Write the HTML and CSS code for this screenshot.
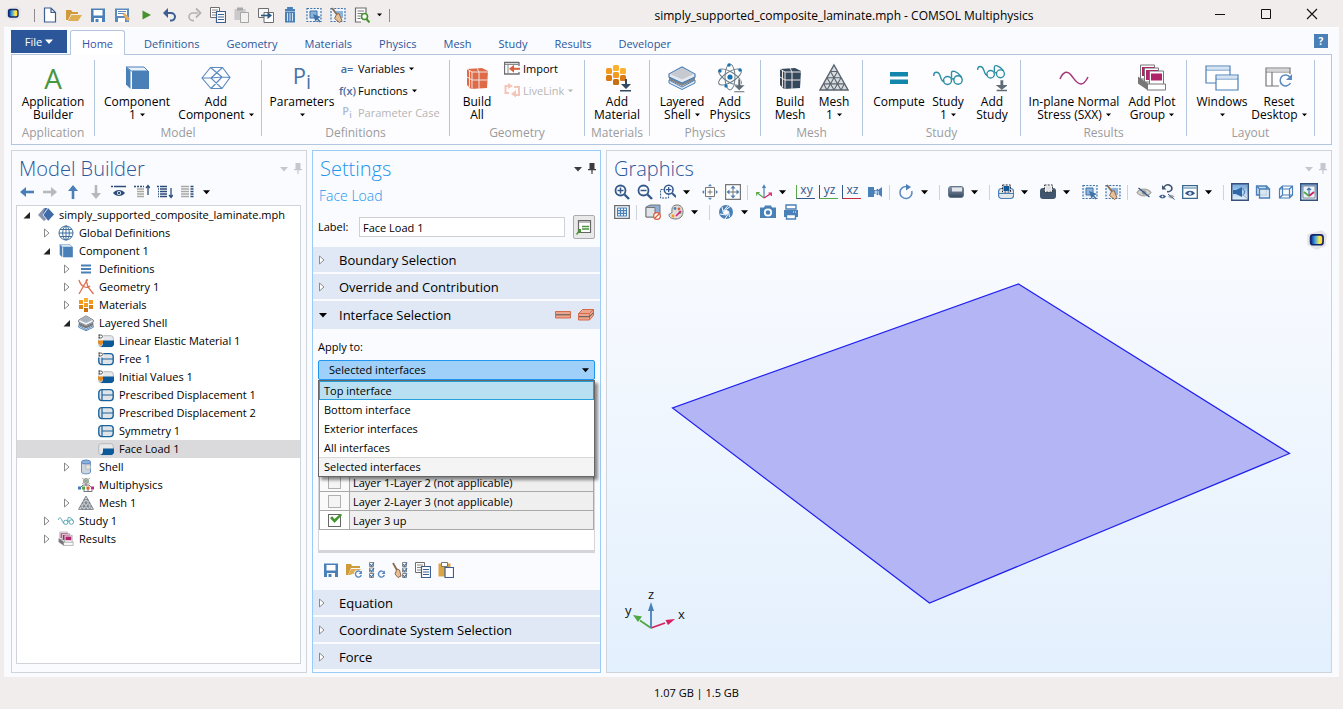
FILE: index.html
```html
<!DOCTYPE html>
<html lang="en">
<head>
<meta charset="utf-8">
<title>simply_supported_composite_laminate.mph - COMSOL Multiphysics</title>
<link rel="stylesheet" href="styles.css">
</head>
<body>
<svg class="sprite" aria-hidden="true">
  <defs>
    <linearGradient id="g-logo"><stop offset="0" stop-color="#12207a"/><stop offset=".35" stop-color="#3aa0e8"/><stop offset=".7" stop-color="#ffe94a"/><stop offset="1" stop-color="#ffd21a"/></linearGradient>
    <linearGradient id="g-dark" x2="0" y2="1"><stop offset="0" stop-color="#8d9aab"/><stop offset="1" stop-color="#33475f"/></linearGradient>
    <linearGradient id="g-on" x2="0" y2="1"><stop offset="0" stop-color="#6fa6dc"/><stop offset="1" stop-color="#eaf4fd"/></linearGradient>
  </defs>
  <symbol id="caret" viewBox="0 0 8 5"><path d="M0 0h8L4 4.600z" fill="currentColor"/></symbol>
  <symbol id="logo" viewBox="0 0 16 16"><path d="M1 4L12 1l4 3-1 9-7 3-7-4z" fill="#e6e4e8"/><rect x="3.500" y="4.500" width="9.500" height="7.500" rx="2" fill="url(#g-logo)" stroke="#12286e" stroke-width="1.300"/></symbol>
  <symbol id="new" viewBox="0 0 16 16"><path d="M2.500 1h6.500l4.500 4.500V15h-11zM9 1v4.500h4.500" fill="#fff" stroke="#3b5f92" stroke-width="1.200"/></symbol>
  <symbol id="open" viewBox="0 0 16 16"><path d="M0 3h5l1.500 2H12v2H5l-3 6H0z" fill="#cf9a3c"/><path d="M5.500 8H16l-4 6H2z" fill="#dfae52"/></symbol>
  <symbol id="save" viewBox="0 0 16 16"><path d="M1 1.500h14V15H1z" fill="#4a80b8"/><path d="M3.500 3h9v5.500h-9zM4 11h8v4H4z" fill="#fff"/><path d="M5.500 12h3v3h-3z" fill="#4a80b8"/></symbol>
  <symbol id="saveas" viewBox="0 0 16 16"><path d="M1 1.500h14V15H1z" fill="#5b8bbd"/><path d="M3 3h10v6H3zM4 11h7v4H4z" fill="#fff"/><path d="M4 4.500h8M4 6.500h6" stroke="#5b8bbd"/><path d="M8.500 7l2.500-1 5 6-2.500 2.500z" fill="#e5ad5d"/></symbol>
  <symbol id="run" viewBox="0 0 16 16"><path d="M4.500 3.500L13 8l-8.500 4.500z" fill="#47922f"/></symbol>
  <symbol id="undo" viewBox="0 0 16 16"><path d="M3 6h6a4 3.800 0 010 7.600H8" fill="none" stroke="#3c5e90" stroke-width="2"/><path d="M1 6l5-5v10z" fill="#3c5e90"/></symbol>
  <symbol id="redo" viewBox="0 0 16 16"><path d="M12 6H7a4 3.800 0 000 7.600h1" fill="none" stroke="#b3b1b1" stroke-width="1.600"/><path d="M10 1.500L14.500 6 10 10.500" fill="none" stroke="#b3b1b1" stroke-width="1.800"/></symbol>
  <symbol id="copy" viewBox="0 0 16 16"><path d="M.5.5h9v10h-9z" fill="#fff" stroke="#6d6d6d"/><path d="M2 3h6M2 5.500h6M2 8h6" stroke="#888"/><path d="M6.500 4.500h9v11h-9z" fill="#fff" stroke="#3b5f92" stroke-width="1.200"/><path d="M8 7.500h6M8 10h6M8 12.500h6" stroke="#3b5f92" stroke-width="1.200"/></symbol>
  <symbol id="paste-off" viewBox="0 0 16 16"><path d="M.5 2h11v11H.5z" fill="#cbc9c9"/><path d="M3 .5h6v3H3z" fill="#a9a9a9"/><path d="M6.500 5.500h8v10h-8z" fill="#f3f1f1" stroke="#a5a5a5"/></symbol>
  <symbol id="paste" viewBox="0 0 16 16"><path d="M.5 1.500h12v13H.5z" fill="#dba544"/><path d="M3.500.5h6v4h-6z" fill="#fff" stroke="#777"/><path d="M7 5.500h8.500v10H7z" fill="#fff" stroke="#3b5f92" stroke-width="1.200"/></symbol>
  <symbol id="dup" viewBox="0 0 16 16"><path d="M.5 1.500h10v9H.5z" fill="#f8f7f7" stroke="#6d6d6d"/><path d="M6 5.500h9.500v10H6z" fill="#fff" stroke="#6d6d6d"/><path d="M3 8.500h8" stroke="#2d5680" stroke-width="1.600"/><path d="M9.500 5l4.500 3.500L9.500 12z" fill="#2d5680"/></symbol>
  <symbol id="trash" viewBox="0 0 16 16"><path d="M3 3h10M6 2V1h4v1" fill="none" stroke="#4a80b8" stroke-width="1.800"/><path d="M3 4.500h10V15.500H3z" fill="#4a80b8"/><path d="M5.500 6v8M8 6v8M10.500 6v8" stroke="#d6e5f3"/></symbol>
  <symbol id="selbox" viewBox="0 0 16 16"><path d="M1 1.500h14v13H1z" fill="#edf4fb" stroke="#3f72a8" stroke-width="1.200" stroke-dasharray="2 1.300"/><path d="M4 4h7v7H4z" fill="#8fb4da" stroke="#3f72a8"/><path d="M7 7l8 3-3 1.500 3 3-1.500 1-2.500-3L9.500 15z" fill="#3f72a8"/></symbol>
  <symbol id="selclear" viewBox="0 0 16 16"><path d="M1 1.500h14v13H1z" fill="#edf4fb" stroke="#3f72a8" stroke-width="1.200" stroke-dasharray="2 1.300"/><path d="M6 4h7v7H6z" fill="#8fb4da"/><path d="M2 1l6 8" stroke="#8a6a50" stroke-width="1.800"/><path d="M6.500 7.500l2.500-1 3 7-2.500 2-5-4z" fill="#e8c096" stroke="#8a6a50"/></symbol>
  <symbol id="find" viewBox="0 0 16 16"><path d="M7 15H1.500V1h10.500v5" fill="#fff" stroke="#6d6d6d" stroke-width="1.200"/><path d="M3.500 4h6.500M3.500 6.500h5M3.500 9h3M3.500 11.500h3" stroke="#777"/><circle cx="10.500" cy="9.500" r="3" fill="#fff" stroke="#47922f" stroke-width="1.600"/><path d="M12.500 12l3 3.500" stroke="#47922f" stroke-width="2"/></symbol>

  <symbol id="r-cube" viewBox="0 0 28 28"><path d="M3 3h18l4 4H8.500z" fill="#eaf2fa" stroke="#4a80b8"/><path d="M3 3l4.500 4v18L3 20.500z" fill="#4a80b8"/><path d="M9 7h17v18H9z" fill="#4a80b8"/></symbol>
  <symbol id="r-poly" viewBox="0 0 30 24"><path d="M1 12L9.500 1.500h12L29 11.500l-8 11h-11zM9.500 1.500L21 11M21.500 1.500L10 12M1 12h9l11 10.500M29 11.500L21 11M10 12l11-1M10 22.500L21 11" fill="none" stroke="#5a8abf" stroke-width="1.100"/></symbol>
  <symbol id="r-build" viewBox="0 0 24 24"><path d="M2 3l15-1 6 3-1 17-16 1-4-4z" fill="currentColor"/><path d="M2 3l5 3h16M7 6v17M2 11l5 3h15.500M12 2l2 4v17M4.500 4.500V21M2 3" fill="none" stroke="#f0e6e4" stroke-width="1"/></symbol>
  <symbol id="r-import" viewBox="0 0 16 16"><path d="M15 2.500H.5V14H15V12M15 2v4" fill="none" stroke="#6d6d6d" stroke-width="1.300"/><path d="M1 4.500h14M4 5v9" stroke="#8a8a8a"/><path d="M8 8.800h8" stroke="#d9603c" stroke-width="2"/><path d="M5 8.800l5-4v8z" fill="#d9603c"/></symbol>
  <symbol id="r-live" viewBox="0 0 16 16"><path d="M5 4H1.500v7H5M10 5h5v8h-4" fill="none" stroke="#f3c6ba" stroke-width="2"/><path d="M4 1l5 3-5 3zM12 8l-5 4 5 3.500z" fill="#f3c6ba"/></symbol>
  <symbol id="r-mat" viewBox="0 0 28 28"><g fill="#f39a1f"><rect x="10" y="1" width="6" height="6" rx="1.500" fill="#fbb02e"/><rect x="3" y="4" width="6" height="6" rx="1.500"/><rect x="17" y="4" width="6" height="6" rx="1.500" fill="#fbb02e"/><rect x="10" y="8" width="6" height="6" rx="1.500"/><rect x="3" y="11" width="6" height="6" rx="1.500" fill="#d97a14"/><rect x="17" y="11" width="6" height="6" rx="1.500" fill="#d97a14"/><rect x="10" y="15" width="6" height="6" rx="1.500" fill="#c86d10"/></g><path d="M22 15h2v5h4l-5 5-5-5h4zM17 26h11v1.500H17z" fill="#34495e"/></symbol>
  <symbol id="r-shell" viewBox="0 0 28 24"><path d="M1 14l13 7 13-7v3l-13 6.500L1 17z" fill="#dfe9f4" stroke="#4a80b8"/><path d="M1 11l13 6 13-6v3l-13 6-13-6z" fill="#858585"/><path d="M1 8l13-7 13 7v3l-13 6-13-6z" fill="#e6eaf0" stroke="#4a80b8" stroke-width="1.200"/><path d="M2 8l12-6.300L26 8l-12 5.500z" fill="#c6cad0"/></symbol>
  <symbol id="t-shell" viewBox="0 0 16 16"><path d="M.7 10.500L8 14.500l7.300-4v1.800L8 15.700.7 12.300z" fill="#e9eff6" stroke="#4a80b8" stroke-width=".9"/><path d="M.7 7.500L8 11l7.300-3.500v2.500L8 13.500.7 10z" fill="#777"/><path d="M.7 5L8 .8 15.300 5v2L8 10.500.7 7z" fill="#eef1f5" stroke="#6b7684" stroke-width=".9"/><path d="M1.500 5L8 1.300 14.500 5 8 8z" fill="#a9b1bc"/></symbol>
  <symbol id="r-atom" viewBox="0 0 30 30"><g fill="none" stroke="#6d7b85" stroke-width="1"><ellipse cx="15" cy="14" rx="5" ry="13"/><ellipse cx="15" cy="14" rx="5" ry="13" transform="rotate(58 15 14)"/><ellipse cx="15" cy="14" rx="5" ry="13" transform="rotate(-58 15 14)"/></g><g fill="#1773b0"><circle cx="15" cy="14" r="2.600"/><circle cx="14" cy="2" r="1.700"/><circle cx="5" cy="8" r="1.700"/><circle cx="25" cy="7" r="1.700"/><circle cx="11" cy="23" r="1.700"/></g><path d="M23 16h2.500v6H30l-5.800 5.500L18.500 22H23zM19 28h10.500v1.500H19z" fill="#5f6c78" stroke="#fff" stroke-width=".5"/></symbol>
  <symbol id="r-mesh" viewBox="0 0 30 28"><path d="M15 1l14 25H1z" fill="#d9dcdf" stroke="#5b6470" stroke-width="1.400"/><path d="M11.500 7.500h7M8 13.700h14M4.700 19.900h20.600M11.500 7.500L22 26M8 13.700L15 26M4.700 19.900L8 26M18.500 7.500L8 26M22 13.700L15 26M25.300 19.900L22 26" fill="none" stroke="#5b6470" stroke-width="1.100"/></symbol>
  <symbol id="r-eq" viewBox="0 0 20 14"><path d="M1 1h18v4.500H1zM1 8.500h18V13H1z" fill="#1286ab"/></symbol>
  <symbol id="r-glasses" viewBox="0 0 30 16"><g fill="none" stroke="#2b8ea3" stroke-width="1.400"><path d="M.7 6c0-5 5-5 6.500 0s2.500 6 4.300 5"/><circle cx="14.500" cy="10.500" r="4"/><circle cx="25" cy="10" r="4.200"/><path d="M18.500 9.500c.8-1 1.700-1 2.500 0M18.500 8V3c0-3 5-2.500 10 4"/></g></symbol>
  <symbol id="r-addstudy" viewBox="0 0 32 29"><use href="#r-glasses" width="30" height="16"/><path d="M25 17h3v5h5l-6.500 5L20 22h5zM21 27h11v1.500H21z" fill="#5f6c78"/></symbol>
  <symbol id="r-wave" viewBox="0 0 30 14"><path d="M1 8C4 1 8-1 12 4s6 9 10 9c3 0 5-3 7-7" fill="none" stroke="#a83377" stroke-width="1.500"/></symbol>
  <symbol id="r-plots" viewBox="0 0 30 27"><g fill="#fff" stroke="#777"><path d="M3.500.5h14v14h-14z"/><path d="M7.500 3.500h14v14h-14z"/><path d="M12.500 6.500h14v14h-14z"/></g><path d="M5 2.500h12v1H7v8H5zM9 5.500h12v1h-9v9H9zM14 9h11v7H14z" fill="#b0246c"/><path d="M1 12l10 7v7L1 19z" fill="#777"/><path d="M10.500 19.500h18v6h-18z" fill="#fff" stroke="#777"/></symbol>
  <symbol id="r-windows" viewBox="0 0 34 26"><path d="M1 1h24v17H1zM1 5h24" fill="#fff" stroke="#4a80b8" stroke-width="1.200"/><path d="M2 2h22v2.500H2z" fill="#d5e3f2"/><path d="M11 10h22v15H11zM11 14h22" fill="#fff" stroke="#4a80b8" stroke-width="1.200"/><path d="M12 11h20v2.500H12z" fill="#d5e3f2"/></symbol>
  <symbol id="r-reset" viewBox="0 0 28 22"><path d="M14 19H1V1h24v6M1 5h24M7 5v14" fill="none" stroke="#777" stroke-width="1.200"/><path d="M2 2h22v2.500H2z" fill="#d5d5d5"/><path d="M25 10a5.500 5.500 0 10.500 6" fill="none" stroke="#5a8abf" stroke-width="1.500"/><path d="M27 7v6h-6z" fill="#5a8abf"/></symbol>

  <symbol id="left" viewBox="0 0 16 16"><path d="M5 8h10" stroke="currentColor" stroke-width="2.600"/><path d="M7 3L1 8l6 5z" fill="currentColor"/></symbol>
  <symbol id="eyebar" viewBox="0 0 16 16"><path d="M3 2.500h12M0 2.500h2" stroke="#2c4d7a" stroke-width="1.600"/><path d="M2 9c3-4 9-4 12 0-3 4-9 4-12 0z" fill="#2c4d7a"/><circle cx="8" cy="9" r="2" fill="#fff"/><circle cx="8" cy="9" r="1.200" fill="#2c4d7a"/></symbol>
  <symbol id="listup" viewBox="0 0 16 16"><path d="M0 2.500h10" stroke="#2c4d7a" stroke-width="1.300" stroke-dasharray="2 1"/><path d="M3 5h7M3 7.500h7M3 10h7M3 12.500h7" stroke="#a9a9a0" stroke-width="1.300"/><path d="M14 2v9M12 4l2-2.500L16 4" fill="none" stroke="#2c4d7a" stroke-width="1.300"/></symbol>
  <symbol id="listdown" viewBox="0 0 16 16"><path d="M0 2.500h2M3 2.500h7M3 5h7M3 7.500h7M3 10h7M3 12.500h7M1 5h1M1 7.500h1M1 10h1M1 12.500h1" stroke="#2c4d7a" stroke-width="1.400"/><path d="M14 4v9M12 11l2 2.500 2-2.500" fill="none" stroke="#2c4d7a" stroke-width="1.300"/></symbol>
  <symbol id="listcol" viewBox="0 0 16 16"><path d="M1 2.500h8M1 5h8M1 7.500h8M1 10h8M1 12.500h8" stroke="#a9a9a9" stroke-width="1.300"/><path d="M10.500 2.500h3M10.500 5h3M10.500 7.500h3M10.500 10h3M10.500 12.500h3" stroke="#2c4d7a" stroke-width="1.500"/></symbol>
  <symbol id="pin" viewBox="0 0 8 11"><path d="M1.500 0h5v6H8v1.200H4.600V11H3.400V7.200H0V6h1.500z" fill="currentColor"/></symbol>
  <symbol id="tw-closed" viewBox="0 0 12 12"><path d="M3.500 2l4.500 4-4.500 4z" fill="#fff" stroke="#8a8a8a"/></symbol>
  <symbol id="tw-open" viewBox="0 0 12 12"><path d="M9 3v6.500H2.500z" fill="#222"/></symbol>
  <symbol id="t-root" viewBox="0 0 16 14"><path d="M6 0L0 7l6 6 2.500-2L5 7l4-5z" fill="#8a94b0"/><path d="M7 0h3l6 6.500-6 6.500L4.500 7z" fill="#3f6ca6"/><path d="M10 0L5 7l5 6" fill="none" stroke="#fff" stroke-width=".8"/></symbol>
  <symbol id="t-globe" viewBox="0 0 16 16"><g fill="#fff" stroke="#3f6f9f"><circle cx="8" cy="8" r="7"/><ellipse cx="8" cy="8" rx="3.300" ry="7" fill="none"/><path d="M8 1v14M1 8h14M2 4.500h12M2 11.500h12"/></g></symbol>
  <symbol id="t-eq" viewBox="0 0 16 16"><path d="M3 4.500h10M3 8h10M3 11.500h10" stroke="#4a80b8" stroke-width="2"/></symbol>
  <symbol id="t-geom" viewBox="0 0 16 16"><path d="M9 1L1 15M8 1l2 7 5.500 7M1 1c2 7 8 9 11 6M8 1h2" fill="none" stroke="#df7050" stroke-width="1.300"/></symbol>
  <symbol id="t-mat" viewBox="0 0 16 16"><path d="M6 1h4v4H6z" fill="#fbb02e"/><path d="M1 3h4v4H1zM11 3h4v4h-4zM6 6h4v4H6z" fill="#f39a1f"/><path d="M1 8h4v4H1zM11 8h4v4h-4z" fill="#d98415"/><path d="M6 11h4v4H6z" fill="#c86d10"/></symbol>
  <symbol id="t-dom" viewBox="0 0 16 14"><rect x=".7" y="1.700" width="14.600" height="11" rx="2.500" fill="#e6e8ea" stroke="#b5b8bb"/><path d="M5 6.500h11V11l-2 2H2.500C4 12 5 11 5 9z" fill="#0c5a9a"/></symbol>
  <symbol id="t-bnd" viewBox="0 0 16 14"><rect x=".8" y="1.600" width="14.400" height="11" rx="3" fill="#dfe4e8" stroke="#1b639c" stroke-width="1.400"/><path d="M4 2v10M4 7h11" stroke="#1b639c" stroke-width="1.200"/></symbol>
  <symbol id="t-d" viewBox="0 0 8 10"><path d="M0 0h7v7H0z" fill="#fff"/><path d="M1.500 1h2.500a2 2 0 010 4H1.500zM.5 1h2M.5 5h2" fill="none" stroke="#333"/></symbol>
  <symbol id="t-domd" viewBox="0 0 16 14"><use href="#t-dom"/><use href="#t-d" width="6" height="8"/><path d="M0 6.500h5v2.500L3 12 0 9z" fill="#e58a1f"/></symbol>
  <symbol id="t-bndd" viewBox="0 0 16 14"><use href="#t-bnd"/><use href="#t-d" width="6" height="8"/></symbol>
  <symbol id="t-cyl" viewBox="0 0 16 16"><path d="M3.500 3v10c0 2.500 9 2.500 9 0V3" fill="#ccd4e0" stroke="#6a92c4"/><ellipse cx="8" cy="3" rx="4.500" ry="2" fill="#8fb0dc" stroke="#5a86bd"/><circle cx="10" cy="8" r="2.500" fill="#e4e4e6" stroke="#bbb"/></symbol>
  <symbol id="t-multi" viewBox="0 0 16 16"><path d="M8 5v4M2 11l3-3h6l3 3M6 12v3M10 12v3M6 14.500h8V13" fill="none" stroke="#777"/><circle cx="8" cy="4" r="2.500" fill="#a8c8a0" stroke="#999"/><path d="M4 1l8 6M12 1L4 7" stroke="#999" stroke-width=".8"/><path d="M0 9.500h3v3H0z" fill="#3f78b4"/><path d="M4 9.500h3v3H4z" fill="#4da84a"/><path d="M8.500 9.500h3v3h-3z" fill="#e0603c"/><path d="M13 9.500h3v3h-3z" fill="#c8267c"/></symbol>

  <symbol id="goto" viewBox="0 0 16 16"><path d="M2.500 1.500h12v12h-12z" fill="#fff" stroke="#666" stroke-width="1.200"/><path d="M3 2h11v2H3z" fill="#b9bbbd"/><path d="M6 7.500h7M6 10h7" stroke="#4b9440" stroke-width="1.300"/><path d="M0 15l3-4-1.500-1H5v4l-1.500-1L1 16z" fill="#47922f"/></symbol>
  <symbol id="if-flat" viewBox="0 0 16 8"><path d="M.5.5h15v6.500H.5z" fill="#eba58c" stroke="#d56b4a"/><path d="M1 3.800h14" stroke="#555"/></symbol>
  <symbol id="if-3d" viewBox="0 0 16 12"><path d="M.5 4.500l4-4h11v6l-4 4.500H.5z" fill="#eba58c" stroke="#d56b4a"/><path d="M.5 4.500h11v6M11.500 4.500l4-4" fill="none" stroke="#d56b4a"/><path d="M1 7.700h10.500l4-4" fill="none" stroke="#555"/></symbol>
  <symbol id="load" viewBox="0 0 16 16"><path d="M0 2h5l1 2h8v2H5l-3 7H0z" fill="#cf9a3c"/><path d="M5 7h10l-3 3-8 3H2z" fill="#dfae52"/><circle cx="12" cy="12" r="4" fill="#fafbff"/><path d="M15 10.500a3 3 0 10.300 2.500" fill="none" stroke="#5a8abf" stroke-width="1.400"/><path d="M16 8.500v3.500h-3.500z" fill="#5a8abf"/></symbol>
  <symbol id="checks" viewBox="0 0 16 16"><path d="M.5.5h4v4h-4zM.5 6h4v4h-4zM.5 11.500h4v4h-4z" fill="#fff" stroke="#888"/><path d="M1 2l1.500 2L5 .5M1 7.500l1.500 2L5 6M1 13l1.500 2L5 11.500" fill="none" stroke="#3f72a8" stroke-width="1.200"/></symbol>
  <symbol id="checks-r" viewBox="0 0 16 16"><use href="#checks"/><path d="M15 10.500a3 3 0 10.300 2.500" fill="none" stroke="#5a8abf" stroke-width="1.400"/><path d="M16 8.500v3.500h-3.500z" fill="#5a8abf"/></symbol>
  <symbol id="checks-b" viewBox="0 0 16 16"><use href="#checks" x="10" width="16" height="16"/><path d="M1 1l5 9" stroke="#8a6a50" stroke-width="1.800"/><path d="M5 7l2.500 1L9 14l-3 1.500L3 12z" fill="#e8c096" stroke="#8a6a50"/></symbol>

  <symbol id="zoomglass" viewBox="0 0 16 16"><circle cx="6.500" cy="6.500" r="5" fill="#fff" stroke="#34588a" stroke-width="1.800"/><path d="M10.500 10.500l4.500 4.500" stroke="#34588a" stroke-width="2.400"/></symbol>
  <symbol id="zin" viewBox="0 0 16 16"><use href="#zoomglass"/><path d="M3.500 6.500h6M6.500 3.500v6" stroke="#34588a" stroke-width="1.500"/></symbol>
  <symbol id="zout" viewBox="0 0 16 16"><use href="#zoomglass"/><path d="M3.500 6.500h6" stroke="#34588a" stroke-width="1.500"/></symbol>
  <symbol id="zbox" viewBox="0 0 16 16"><path d="M.6 5.500h8v8.500h-8z" fill="none" stroke="#34588a" stroke-dasharray="2 1"/><use href="#zin" x="3" width="14" height="14"/></symbol>
  <symbol id="zsel" viewBox="0 0 16 16"><path d="M3.500 3.500h9v9h-9z" fill="#fff" stroke="#777"/><path d="M5.500 8h5M8 5.500v5" stroke="#777"/><path d="M8 0l2 2.200H6zM8 16l2-2.200H6zM0 8l2.200-2v4zM16 8l-2.200-2v4z" fill="#4a80b8"/></symbol>
  <symbol id="zext" viewBox="0 0 16 16"><path d="M.6.6h14.800v14.800H.6z" fill="#fff" stroke="#777" stroke-width="1.200"/><path d="M4 8h8M8 4v8" stroke="#777"/><path d="M8 1.500l2.500 3h-5zM8 14.500l2.500-3h-5zM1.500 8l3-2.500v5zM14.500 8l-3-2.500v5z" fill="#4a80b8"/></symbol>
  <symbol id="axes" viewBox="0 0 16 16"><path d="M8 14V2M6.500 4L8 1.500 9.500 4" fill="none" stroke="#4a80b8" stroke-width="1.200"/><path d="M8 14L.7 8.500M.7 11.500v-3h3" fill="none" stroke="#58a84a" stroke-width="1.200"/><path d="M8 14l7-4.500M12.500 9h2.800v3" fill="none" stroke="#d81e5b" stroke-width="1.200"/></symbol>
  <symbol id="spot" viewBox="0 0 16 16"><path d="M1 3h6v3h2l2-1.500V6l4-3v10l-4-3v1.500L9 10H7v3H1z" fill="#4a80b8"/><path d="M8 7h2v2.500H8zM11.500 7v3" fill="#b9d2ea" stroke="#b9d2ea" stroke-width=".8"/></symbol>
  <symbol id="rot" viewBox="0 0 16 16"><path d="M8.500 2.500A6 6 0 1013.800 7" fill="none" stroke="#5a8abf" stroke-width="1.500"/><path d="M8 0l5 3-5 3.500z" fill="#4a80b8"/></symbol>
  <symbol id="render" viewBox="0 0 16 16"><rect x=".5" y="2.500" width="15" height="11" rx="2.500" fill="url(#g-dark)" stroke="#66788c"/><path d="M4 3.500h10v4H4z" fill="#e3e7ec"/></symbol>
  <symbol id="sel-l" viewBox="0 0 16 16"><rect x=".6" y="4.500" width="15" height="10" rx="3" fill="#e2e7ea" stroke="#4a80b8" stroke-width="1.200"/><path d="M1 9.500h14" stroke="#4a80b8"/><path d="M5 1.500h7v6H5z" fill="#0c5a9a" stroke="#fff"/><path d="M4.500 1h8v7h-8z" fill="none" stroke="#223" stroke-dasharray="2 1.200"/></symbol>
  <symbol id="sel-d" viewBox="0 0 16 16"><rect y="4" width="16" height="11" rx="3" fill="#40566f"/><path d="M5 1.500h7v6H5z" fill="#dfe4ea" stroke="#fff"/><path d="M4.500 1h8v7h-8z" fill="none" stroke="#333" stroke-dasharray="2 1.200"/></symbol>
  <symbol id="hide" viewBox="0 0 16 16"><path d="M1 8.500c3-4.500 11-4.500 14 0-3 4.500-11 4.500-14 0z" fill="#d3d3d1" stroke="#a6a6a0" stroke-width="1.300"/><circle cx="8" cy="8.500" r="2.300" fill="#9a9a96"/><path d="M2.500 4l11 9" stroke="#34588a" stroke-width="1.400"/></symbol>
  <symbol id="unhide" viewBox="0 0 16 16"><path d="M5 3.500a4 3.500 0 117 3 4 4 0 01-4 1" fill="none" stroke="#40566f" stroke-width="1.600"/><path d="M3 1v4.500h4.500z" fill="#40566f"/><path d="M0 12.500c2-2.500 5-2.500 7 0-2 2.500-5 2.500-7 0z" fill="#34588a"/><circle cx="3.500" cy="12.500" r=".9" fill="#fff"/><path d="M9 12.500c2-2.500 4.500-2.500 6.500 0-2 2.500-4.500 2.500-6.500 0z" fill="#b5b5b0"/><path d="M9 10l6.500 5.500" stroke="#34588a"/></symbol>
  <symbol id="eyewin" viewBox="0 0 16 14"><path d="M.7.7h14.600v12.600H.7z" fill="#fff" stroke="#34688f" stroke-width="1.300"/><path d="M1 3h14" stroke="#7fa6c4" stroke-width="1.500"/><path d="M3 8.300c2.500-3.300 7.500-3.300 10 0-2.500 3.300-7.500 3.300-10 0z" fill="#34588a"/><circle cx="8" cy="8.300" r="1.600" fill="#cfe0f0"/></symbol>
  <symbol id="light" viewBox="0 0 18 18"><path d="M.7.700h16.600v16.600H.7z" fill="url(#g-on)" stroke="#37507a" stroke-width="1.400"/><path d="M2 7h3l6-3v10l-6-3H2z" fill="#2f68a8"/><path d="M11.500 6c2.500 1 2.500 5 0 6" fill="#cfe2f4" stroke="#2f68a8"/><path d="M12 6l5-4M12 12l5 4" fill="none" stroke="#8c9aa8" stroke-width=".8"/></symbol>
  <symbol id="transp" viewBox="0 0 16 16"><path d="M1.500 2h10v9h-10z" fill="#c5daef" stroke="#4a80b8" stroke-width="1.300"/><path d="M4.500 5h10v9h-10zM1.500 2l3 3M11.500 2l3 3" fill="#dfe8f0" fill-opacity=".8" stroke="#4a80b8" stroke-width="1.300"/></symbol>
  <symbol id="wire" viewBox="0 0 16 16"><path d="M1.500 5h10v9h-10zM4.500 2h10v9h-10zM1.500 5l3-3M11.500 5l3-3M1.500 14l3-3M11.500 14l3-3" fill="none" stroke="#4a80b8" stroke-width="1.200"/></symbol>
  <symbol id="orient" viewBox="0 0 18 18"><path d="M.7.700h16.600v16.600H.7z" fill="url(#g-on)" stroke="#37507a" stroke-width="1.400"/><path d="M3 3h12v12H3z" fill="#e9f3fc" stroke="#777" stroke-width=".8"/><path d="M9 13V5M7 7l2-2 2 2" fill="none" stroke="#3f72a8" stroke-width="1.200"/><path d="M9 13L4 9" stroke="#58a84a" stroke-width="1.800"/><path d="M9 13l5-4" stroke="#d81e5b" stroke-width="1.800"/></symbol>
  <symbol id="grid" viewBox="0 0 16 14"><path d="M.7.700h14.600v12.600H.7z" fill="#fff" stroke="#6d6d6d" stroke-width="1.300"/><path d="M3.500 3h9v8h-9zM6.500 3v8M9.500 3v8M3.500 5.700h9M3.500 8.300h9" fill="none" stroke="#4a80b8" stroke-width="1.200"/></symbol>
  <symbol id="nobox" viewBox="0 0 16 16"><path d="M1 3l4-2h10v9l-4 3H1z" fill="#8fb0d8" stroke="#777"/><path d="M1 3.500h9V13H1z" fill="#dfe4ea" stroke="#777"/><circle cx="12" cy="12" r="3.300" fill="#fff" stroke="#d9603c" stroke-width="1.300"/><path d="M9.800 14.200l4.400-4.400" stroke="#d9603c" stroke-width="1.300"/></symbol>
  <symbol id="palette" viewBox="0 0 16 16"><path d="M9 1c5 0 6 4 6 7 0 4-3 7-7 7-5 0-7-2-7-4 0-2 3-1 3-3S3 1 9 1z" fill="#e2dcd4" stroke="#777"/><circle cx="7" cy="4.500" r="1.400" fill="#4a80b8"/><circle cx="11" cy="5" r="1.400" fill="#d9603c"/><circle cx="12" cy="8.500" r="1.400" fill="#58a84a"/><circle cx="5" cy="12" r="1.400" fill="#f39a1f"/><path d="M8 12l5-5" stroke="#d81e8b" stroke-width="1.600"/></symbol>
  <symbol id="shutter" viewBox="0 0 16 16"><circle cx="8" cy="8" r="7" fill="#4a80b8"/><path d="M8 5.500L10.500 7v2.500L8 11 5.500 9.500V7z" fill="#fafbff"/><path d="M8 5.500L13 2M10.500 7l1 6M10.500 9.500L7 15M8 11l-6-1M5.500 9.500L4 3M5.500 7L10 1.500" stroke="#fafbff"/></symbol>
  <symbol id="camera" viewBox="0 0 16 14"><path d="M0 2.500h4L5 .5h6l1 2h4V13H0z" fill="#4a80b8"/><circle cx="8" cy="7.500" r="3.200" fill="#4a80b8" stroke="#fff" stroke-width="1.800"/></symbol>
  <symbol id="print" viewBox="0 0 16 16"><path d="M3 1h10v4H3z" fill="#fff" stroke="#4a80b8" stroke-width="1.400"/><path d="M1 6h14v7H1z" fill="#4a80b8"/><path d="M3.500 10.500h9V15h-9z" fill="#fff" stroke="#4a80b8" stroke-width="1.400"/><path d="M10 8h1M12 8h1" stroke="#fff"/></symbol>
</svg>

<div class="window">
  <header class="titlebar">
    <div class="quick">
      <svg class="applogo"><use href="#logo"/></svg><i class="vsep"></i>
      <button class="qb" aria-label="New"><svg><use href="#new"/></svg></button>
      <button class="qb" aria-label="Open"><svg><use href="#open"/></svg></button>
      <button class="qb" aria-label="Save"><svg><use href="#save"/></svg></button>
      <button class="qb" aria-label="Save as"><svg><use href="#saveas"/></svg></button>
      <button class="qb" aria-label="Run"><svg><use href="#run"/></svg></button>
      <button class="qb" aria-label="Undo"><svg><use href="#undo"/></svg></button>
      <button class="qb" aria-label="Redo"><svg><use href="#redo"/></svg></button>
      <button class="qb" aria-label="Copy"><svg><use href="#copy"/></svg></button>
      <button class="qb" aria-label="Paste"><svg><use href="#paste-off"/></svg></button>
      <button class="qb" aria-label="Duplicate"><svg><use href="#dup"/></svg></button>
      <button class="qb" aria-label="Delete"><svg><use href="#trash"/></svg></button>
      <button class="qb" aria-label="Select box"><svg><use href="#selbox"/></svg></button>
      <button class="qb" aria-label="Clear selection"><svg><use href="#selclear"/></svg></button>
      <button class="qb" aria-label="Find"><svg><use href="#find"/></svg></button>
      <button class="qmore" aria-label="More"><svg class="caret-s"><use href="#caret"/></svg></button><i class="vsep"></i>
    </div>
    <h1 class="doc-title">simply_supported_composite_laminate.mph - COMSOL Multiphysics</h1>
    <div class="winbtns">
      <button aria-label="Minimize"><svg viewBox="0 0 12 12"><path d="M1 6.500h10" stroke="#111" stroke-width="1"/></svg></button>
      <button aria-label="Maximize"><svg viewBox="0 0 12 12"><path d="M1.500 1.500h9v9h-9z" fill="none" stroke="#111"/></svg></button>
      <button aria-label="Close"><svg viewBox="0 0 12 12"><path d="M1 1l10 10M11 1L1 11" stroke="#111" stroke-width="1.100"/></svg></button>
    </div>
  </header>

  <div class="client">
    <nav class="tabs">
      <button class="file">File <svg><use href="#caret"/></svg></button>
      <button class="tab on">Home</button>
      <button class="tab">Definitions</button><button class="tab">Geometry</button><button class="tab">Materials</button><button class="tab">Physics</button><button class="tab">Mesh</button><button class="tab">Study</button><button class="tab">Results</button><button class="tab">Developer</button>
      <button class="help" aria-label="Help">?</button>
    </nav>

    <section class="ribbon" aria-label="Home">
      <div class="group g-app"><div class="tools">
        <button class="big"><span class="pic glyph green">A</span><span>Application<br>Builder</span></button>
      </div><h2>Application</h2></div>
      <div class="group g-model"><div class="tools">
        <button class="big w84"><span class="pic"><svg class="s28"><use href="#r-cube"/></svg></span><span>Component<br>1 <svg class="dd"><use href="#caret"/></svg></span></button>
        <button class="big w74"><span class="pic"><svg class="s30"><use href="#r-poly"/></svg></span><span>Add<br>Component <svg class="dd"><use href="#caret"/></svg></span></button>
      </div><h2>Model</h2></div>
      <div class="group g-defs"><div class="tools">
        <button class="big w74"><span class="pic glyph pi">P<sub>i</sub></span><span>Parameters<br><svg class="dd"><use href="#caret"/></svg></span></button>
        <div class="stack">
          <button class="small"><b>a=</b>Variables <svg class="dd"><use href="#caret"/></svg></button>
          <button class="small"><b>f(x)</b>Functions <svg class="dd"><use href="#caret"/></svg></button>
          <button class="small" disabled><b>P<sub>i</sub></b>Parameter Case</button>
        </div>
      </div><h2>Definitions</h2></div>
      <div class="group g-geom"><div class="tools">
        <button class="big w54 red"><span class="pic"><svg class="s24"><use href="#r-build"/></svg></span><span>Build<br>All</span></button>
        <div class="stack">
          <button class="small"><svg class="s16"><use href="#r-import"/></svg>Import</button>
          <button class="small" disabled><svg class="s16"><use href="#r-live"/></svg>LiveLink <svg class="dd"><use href="#caret"/></svg></button>
        </div>
      </div><h2>Geometry</h2></div>
      <div class="group g-mat"><div class="tools">
        <button class="big"><span class="pic"><svg class="s28"><use href="#r-mat"/></svg></span><span>Add<br>Material</span></button>
      </div><h2>Materials</h2></div>
      <div class="group g-phys"><div class="tools">
        <button class="big w54"><span class="pic"><svg class="s28"><use href="#r-shell"/></svg></span><span>Layered<br>Shell <svg class="dd"><use href="#caret"/></svg></span></button>
        <button class="big w42"><span class="pic"><svg class="s30"><use href="#r-atom"/></svg></span><span>Add<br>Physics</span></button>
      </div><h2>Physics</h2></div>
      <div class="group g-mesh"><div class="tools">
        <button class="big w44 navy"><span class="pic"><svg class="s24"><use href="#r-build"/></svg></span><span>Build<br>Mesh</span></button>
        <button class="big w44"><span class="pic"><svg class="s30"><use href="#r-mesh"/></svg></span><span>Mesh<br>1 <svg class="dd"><use href="#caret"/></svg></span></button>
      </div><h2>Mesh</h2></div>
      <div class="group g-study"><div class="tools">
        <button class="big w60"><span class="pic"><svg class="s20"><use href="#r-eq"/></svg></span><span>Compute</span></button>
        <button class="big w38"><span class="pic"><svg class="s30"><use href="#r-glasses"/></svg></span><span>Study<br>1 <svg class="dd"><use href="#caret"/></svg></span></button>
        <button class="big w50"><span class="pic"><svg class="s30"><use href="#r-addstudy"/></svg></span><span>Add<br>Study</span></button>
      </div><h2>Study</h2></div>
      <div class="group g-res"><div class="tools">
        <button class="big w106"><span class="pic"><svg class="s30"><use href="#r-wave"/></svg></span><span>In-plane Normal<br>Stress (SXX) <svg class="dd"><use href="#caret"/></svg></span></button>
        <button class="big w50"><span class="pic"><svg class="s30"><use href="#r-plots"/></svg></span><span>Add Plot<br>Group <svg class="dd"><use href="#caret"/></svg></span></button>
      </div><h2>Results</h2></div>
      <div class="group g-lay"><div class="tools">
        <button class="big w60"><span class="pic"><svg class="s34"><use href="#r-windows"/></svg></span><span>Windows<br><svg class="dd"><use href="#caret"/></svg></span></button>
        <button class="big w54"><span class="pic"><svg class="s28"><use href="#r-reset"/></svg></span><span>Reset<br>Desktop <svg class="dd"><use href="#caret"/></svg></span></button>
      </div><h2>Layout</h2></div>
    </section>

    <main class="work">
      <section class="panel builder">
        <div class="phead"><h2>Model Builder</h2><span class="pbtns"><svg class="caret-s"><use href="#caret"/></svg><svg class="pin"><use href="#pin"/></svg></span></div>
        <div class="bar">
          <button class="tb blue" aria-label="Back"><svg><use href="#left"/></svg></button>
          <button class="tb grey" aria-label="Forward"><svg class="flip"><use href="#left"/></svg></button>
          <button class="tb blue" aria-label="Up"><svg class="up"><use href="#left"/></svg></button>
          <button class="tb grey" aria-label="Down"><svg class="down"><use href="#left"/></svg></button>
          <button class="tb" aria-label="Show"><svg><use href="#eyebar"/></svg></button>
          <button class="tb" aria-label="Collapse"><svg><use href="#listup"/></svg></button>
          <button class="tb" aria-label="Expand"><svg><use href="#listdown"/></svg></button>
          <button class="tb" aria-label="Columns"><svg><use href="#listcol"/></svg></button>
          <button class="ta" aria-label="More"><svg><use href="#caret"/></svg></button>
        </div>
        <ul class="tree" role="tree">
          <li class="l0" role="treeitem"><svg class="tw"><use href="#tw-open"/></svg><svg class="s16"><use href="#t-root"/></svg>simply_supported_composite_laminate.mph</li>
          <li class="l1" role="treeitem"><svg class="tw"><use href="#tw-closed"/></svg><svg class="s16"><use href="#t-globe"/></svg>Global Definitions</li>
          <li class="l1" role="treeitem"><svg class="tw"><use href="#tw-open"/></svg><svg class="s16"><use href="#r-cube"/></svg>Component 1</li>
          <li class="l2" role="treeitem"><svg class="tw"><use href="#tw-closed"/></svg><svg class="s16"><use href="#t-eq"/></svg>Definitions</li>
          <li class="l2" role="treeitem"><svg class="tw"><use href="#tw-closed"/></svg><svg class="s16"><use href="#t-geom"/></svg>Geometry 1</li>
          <li class="l2" role="treeitem"><svg class="tw"><use href="#tw-closed"/></svg><svg class="s16"><use href="#t-mat"/></svg>Materials</li>
          <li class="l2" role="treeitem"><svg class="tw"><use href="#tw-open"/></svg><svg class="s16"><use href="#t-shell"/></svg>Layered Shell</li>
          <li class="l3" role="treeitem"><span class="tw"></span><svg class="s16"><use href="#t-domd"/></svg>Linear Elastic Material 1</li>
          <li class="l3" role="treeitem"><span class="tw"></span><svg class="s16"><use href="#t-bndd"/></svg>Free 1</li>
          <li class="l3" role="treeitem"><span class="tw"></span><svg class="s16"><use href="#t-domd"/></svg>Initial Values 1</li>
          <li class="l3" role="treeitem"><span class="tw"></span><svg class="s16"><use href="#t-bnd"/></svg>Prescribed Displacement 1</li>
          <li class="l3" role="treeitem"><span class="tw"></span><svg class="s16"><use href="#t-bnd"/></svg>Prescribed Displacement 2</li>
          <li class="l3" role="treeitem"><span class="tw"></span><svg class="s16"><use href="#t-bnd"/></svg>Symmetry 1</li>
          <li class="l3 sel" role="treeitem" aria-selected="true"><span class="tw"></span><svg class="s16"><use href="#t-dom"/></svg>Face Load 1</li>
          <li class="l2" role="treeitem"><svg class="tw"><use href="#tw-closed"/></svg><svg class="s16"><use href="#t-cyl"/></svg>Shell</li>
          <li class="l2" role="treeitem"><span class="tw"></span><svg class="s16"><use href="#t-multi"/></svg>Multiphysics</li>
          <li class="l2" role="treeitem"><svg class="tw"><use href="#tw-closed"/></svg><svg class="s16"><use href="#r-mesh"/></svg>Mesh 1</li>
          <li class="l1" role="treeitem"><svg class="tw"><use href="#tw-closed"/></svg><svg class="s16"><use href="#r-glasses"/></svg>Study 1</li>
          <li class="l1" role="treeitem"><svg class="tw"><use href="#tw-closed"/></svg><svg class="s16"><use href="#r-plots"/></svg>Results</li>
        </ul>
      </section>

      <section class="panel settings">
        <div class="phead"><h2>Settings</h2><span class="pbtns"><svg class="caret-s"><use href="#caret"/></svg><svg class="pin"><use href="#pin"/></svg></span></div>
        <p class="sub">Face Load</p>
        <div class="labelrow"><label for="lbl">Label:</label><input id="lbl" type="text" value="Face Load 1"><button class="goto" aria-label="Go to source"><svg class="s16"><use href="#goto"/></svg></button></div>
        <h3 class="sec"><svg class="tw"><use href="#tw-closed"/></svg>Boundary Selection</h3>
        <h3 class="sec"><svg class="tw"><use href="#tw-closed"/></svg>Override and Contribution</h3>
        <h3 class="sec open"><svg class="caret-s"><use href="#caret"/></svg><span>Interface Selection</span><svg class="if1"><use href="#if-flat"/></svg><svg class="if2"><use href="#if-3d"/></svg></h3>
        <div class="body">
          <label class="apply" for="apply">Apply to:</label>
          <div class="combo">
            <select id="apply"><option>Selected interfaces</option></select><svg class="caret-s"><use href="#caret"/></svg>
            <ul class="popup" role="listbox" aria-label="Apply to">
              <li role="option" class="hot">Top interface</li><li role="option">Bottom interface</li><li role="option">Exterior interfaces</li><li role="option">All interfaces</li><li role="option" class="cur" aria-selected="true">Selected interfaces</li>
            </ul>
          </div>
          <div class="tablebox"><table>
            <tr><td class="ck"><input type="checkbox" id="c1" disabled></td><td><label for="c1">Layer 1-Layer 2 (not applicable)</label></td></tr>
            <tr><td class="ck"><input type="checkbox" id="c2" disabled></td><td><label for="c2">Layer 2-Layer 3 (not applicable)</label></td></tr>
            <tr><td class="ck on"><input type="checkbox" id="c3" checked></td><td><label for="c3">Layer 3 up</label></td></tr>
          </table></div>
          <div class="bar">
            <button class="tb" aria-label="Save"><svg><use href="#save"/></svg></button>
            <button class="tb" aria-label="Load"><svg><use href="#load"/></svg></button>
            <button class="tb" aria-label="Refresh checks"><svg><use href="#checks-r"/></svg></button>
            <button class="tb" aria-label="Clear checks"><svg><use href="#checks-b"/></svg></button>
            <button class="tb" aria-label="Copy"><svg><use href="#copy"/></svg></button>
            <button class="tb" aria-label="Paste"><svg><use href="#paste"/></svg></button>
          </div>
        </div>
        <h3 class="sec"><svg class="tw"><use href="#tw-closed"/></svg>Equation</h3>
        <h3 class="sec"><svg class="tw"><use href="#tw-closed"/></svg>Coordinate System Selection</h3>
        <h3 class="sec last"><svg class="tw"><use href="#tw-closed"/></svg>Force</h3>
      </section>

      <section class="panel graphics">
        <div class="phead"><h2>Graphics</h2><span class="pbtns"><svg class="caret-s"><use href="#caret"/></svg><svg class="pin"><use href="#pin"/></svg></span></div>
        <div class="bar">
          <button class="tb" aria-label="Zoom in"><svg><use href="#zin"/></svg></button>
          <button class="tb" aria-label="Zoom out"><svg><use href="#zout"/></svg></button>
          <button class="tb" aria-label="Zoom box"><svg><use href="#zbox"/></svg></button>
          <button class="ta" aria-label="Zoom options"><svg><use href="#caret"/></svg></button>
          <button class="tb" aria-label="Zoom selected"><svg><use href="#zsel"/></svg></button>
          <button class="tb" aria-label="Zoom extents"><svg><use href="#zext"/></svg></button><i class="sep"></i>
          <button class="tb" aria-label="Default view"><svg><use href="#axes"/></svg></button>
          <button class="ta" aria-label="View options"><svg><use href="#caret"/></svg></button>
          <button class="tb view xy">xy</button><button class="tb view yz">yz</button><button class="tb view xz">xz</button>
          <button class="tb" aria-label="Projection"><svg><use href="#spot"/></svg></button><i class="sep"></i>
          <button class="tb" aria-label="Rotate"><svg><use href="#rot"/></svg></button>
          <button class="ta" aria-label="Rotate options"><svg><use href="#caret"/></svg></button><i class="sep"></i>
          <button class="tb" aria-label="Rendering"><svg><use href="#render"/></svg></button>
          <button class="ta" aria-label="Rendering options"><svg><use href="#caret"/></svg></button><i class="sep"></i>
          <button class="tb" aria-label="Select"><svg><use href="#sel-l"/></svg></button>
          <button class="ta" aria-label="Select options"><svg><use href="#caret"/></svg></button>
          <button class="tb" aria-label="Select domains"><svg><use href="#sel-d"/></svg></button>
          <button class="ta" aria-label="Domain options"><svg><use href="#caret"/></svg></button>
          <button class="tb" aria-label="Select box"><svg><use href="#selbox"/></svg></button>
          <button class="tb" aria-label="Clear"><svg><use href="#selclear"/></svg></button><i class="sep"></i>
          <button class="tb" aria-label="Hide"><svg><use href="#hide"/></svg></button>
          <button class="tb" aria-label="Reset hiding"><svg><use href="#unhide"/></svg></button>
          <button class="tb" aria-label="View hidden"><svg><use href="#eyewin"/></svg></button>
          <button class="ta" aria-label="Hidden options"><svg><use href="#caret"/></svg></button><i class="sep"></i>
          <button class="tb tog" aria-label="Scene light"><svg><use href="#light"/></svg></button>
          <button class="tb" aria-label="Transparency"><svg><use href="#transp"/></svg></button>
          <button class="tb" aria-label="Wireframe"><svg><use href="#wire"/></svg></button>
          <button class="tb tog" aria-label="Orientation"><svg><use href="#orient"/></svg></button>
        </div>
        <div class="bar">
          <button class="tb" aria-label="Grid"><svg><use href="#grid"/></svg></button><i class="sep"></i>
          <button class="tb" aria-label="Clipping"><svg><use href="#nobox"/></svg></button>
          <button class="tb" aria-label="Colors"><svg><use href="#palette"/></svg></button>
          <button class="ta" aria-label="Color options"><svg><use href="#caret"/></svg></button><i class="sep"></i>
          <button class="tb" aria-label="Environment"><svg><use href="#shutter"/></svg></button>
          <button class="ta" aria-label="Environment options"><svg><use href="#caret"/></svg></button>
          <button class="tb" aria-label="Snapshot"><svg><use href="#camera"/></svg></button>
          <button class="tb" aria-label="Print"><svg><use href="#print"/></svg></button>
        </div>
        <svg class="canvas" viewBox="0 0 724 448" preserveAspectRatio="xMidYMin meet" role="img" aria-label="Square plate geometry">
          <path d="M411.500 62L682.500 231.500 322.500 381 65.500 186z" fill="#b4b5f5" stroke="#1f1ff0" stroke-width="1.200"/>
          <use href="#logo" x="699" y="7" width="21" height="21"/>
          <path d="M44 406l14-5" stroke="#d81e5b" stroke-width="1.800"/><path d="M68 397l-7 6-2.500-5z" fill="#d81e5b"/>
          <path d="M44 406l-11-7.500" stroke="#4ea844" stroke-width="1.800"/><path d="M26 393l9 1.500-4 5.500z" fill="#4ea844"/>
          <path d="M44 406V389" stroke="#4a80b8" stroke-width="1.800"/><path d="M44 380l3 9h-6z" fill="#4a80b8"/>
          <text x="41" y="377">z</text><text x="18" y="393">y</text><text x="71" y="397">x</text>
        </svg>
      </section>
    </main>
  </div>
  <footer class="status">1.07 GB | 1.5 GB</footer>
</div>
</body>
</html>
```

FILE: styles.css
```css
* { box-sizing: border-box; }
body { margin: 0; background: #f0edec; color: #000; font: 12px/18px "Open Sans", "Noto Sans", sans-serif; }
button, input, select { font: inherit; color: inherit; }
button { border: 0; padding: 0; background: none; }
h1, h2, h3, p, ul { margin: 0; padding: 0; font-weight: 400; list-style: none; }
svg { display: block; flex: none; width: 16px; height: 16px; }
.sprite { position: absolute; width: 0; height: 0; }

.window { display: flex; flex-direction: column; min-height: 100vh; }

/* Title bar */
.titlebar { display: flex; align-items: center; height: 27px; }
.quick { display: flex; align-items: center; height: 100%; padding-top: 3px; }
.applogo { width: 16px; height: 16px; margin: 0 13px 4px 5px; }
.vsep { width: 1px; height: 13px; margin-right: 3px; background: #8d8b8b; }
.qb { display: grid; place-items: center; width: 24px; height: 22px; }
.qmore { width: 10px; margin-right: 5px; display: grid; place-items: center; }
.caret-s { width: 8px; height: 5px; }
.qmore .caret-s { width: 5px; height: 4px; }
.doc-title { flex: 1; padding: 5px 0 0 98px; font-size: 12px; text-align: center; white-space: nowrap; }
.winbtns { display: flex; margin-right: 8px; }
.winbtns button { display: grid; place-items: center; width: 46px; height: 27px; }
.winbtns svg { width: 12px; height: 12px; }

.client { display: flex; flex: 1; flex-direction: column; margin: 0 4px; padding: 2px 7px 4px; background: #fafbff; border-top: 1px solid #fff; }

/* Tabs */
.tabs { display: flex; align-items: stretch; height: 24px; color: #2b579a; font-size: 11px; }
.file { display: flex; align-items: center; justify-content: center; gap: 3px; width: 56px; height: 23px; background: #2b579a; color: #fff; }
.file svg { width: 8px; height: 6px; }
.tab { height: 24px; padding: 3px 13px 0; margin-right: 1px; }
.tab.on { position: relative; z-index: 1; width: 55px; height: 25px; margin: 0 6px 0 3px; padding: 1px 0 0; border: 1px solid #b4c6de; border-bottom: 0; border-radius: 3px 3px 0 0; background: #fff; color: #3a50a8; }
.help { width: 14px; height: 14px; margin: 4px 4px 0 auto; background: #4a80b8; color: #fff; font-weight: 700; font-size: 10px; line-height: 14px; }

/* Ribbon */
.ribbon { display: flex; height: 91px; padding: 5px 0 8px; border: 1px solid #b4c6de; background: #fdfdff; }
.group { display: flex; flex: none; flex-direction: column; justify-content: space-between; border-right: 1px solid #b4c6de; }
.group h2 { margin-bottom: -4px; color: #9b9b9b; font-size: 12px; line-height: 14px; text-align: center; }
.tools { display: flex; line-height: 13px; }
.g-app { width: 83px; } .g-model { width: 167px; } .g-defs { width: 188px; } .g-geom { width: 135px; } .g-mat { width: 65px; }
.g-phys { width: 111px; } .g-mesh { width: 102px; } .g-study { width: 158px; } .g-res { width: 166px; } .g-lay { width: 128px; }
.g-defs .tools { padding-left: 3px; } .g-phys .tools { padding-left: 5px; } .g-mesh .tools { padding-left: 7px; }
.g-study .tools { padding-left: 6px; } .g-lay .tools { padding-left: 5px; }
.big { display: flex; flex: 1 1 auto; flex-direction: column; align-items: center; white-space: nowrap; line-height: 13px; }
.w38, .w42, .w44, .w50, .w54, .w60, .w74, .w84, .w106 { flex: none; }
.w38 { width: 38px; } .w42 { width: 42px; } .w44 { width: 44px; } .w50 { width: 50px; } .w54 { width: 54px; }
.w60 { width: 60px; } .w74 { width: 74px; } .w84 { width: 84px; } .w106 { width: 106px; }
.pic { display: grid; place-items: center; height: 35px; }
.s16 { width: 16px; height: 16px; } .s20 { width: 20px; } .s24 { width: 24px; height: 24px; } .s28 { width: 28px; height: 28px; } .s30 { width: 30px; height: 30px; } .s34 { width: 34px; height: 28px; }
.dd { display: inline-block; width: 5px; height: 4px; margin-left: 1px; vertical-align: 2px; }
.glyph { font-size: 28px; line-height: 34px; }
.green { color: #47973f; }
.pi { display: block; color: #4a72a8; font-size: 22px; line-height: 30px; }
.pi sub { font-size: 20px; line-height: 20px; }
.red .pic { color: #df6a48; }
.navy .pic { color: #34495e; }
.stack { display: flex; flex-direction: column; margin-bottom: -8px; font-size: 11px; }
.small { display: flex; align-items: center; gap: 3px; height: 22px; padding-bottom: 6px; white-space: nowrap; }
.small b { width: 16px; color: #4a6c9c; font-weight: 600; white-space: nowrap; }
.small sub { font-size: 9px; line-height: 9px; }
.small .dd { margin-top: 2px; }
.small:disabled { color: #b5b5b5; }
.small:disabled b { color: #a9bbd4; }

/* Panels */
.work { display: grid; flex: 1; grid-template-columns: 296px 289px minmax(0, 1fr); gap: 5px; margin-top: 5px; }
.panel { display: flex; flex-direction: column; border: 1px solid #d0d3d8; background: #fafbff; }
.phead { display: flex; justify-content: space-between; height: 31px; padding: 4px 4px 0 7px; }
.phead h2 { color: #2b579a; font-size: 20px; font-weight: 300; line-height: 28px; }
.pbtns { display: flex; gap: 6px; padding-top: 8px; color: #c3c8d0; }
.pbtns .caret-s { margin-top: 4px; }
.pin { width: 8px; height: 11px; }
.bar { display: flex; align-items: center; height: 20px; padding-left: 3px; }
.tb { display: grid; flex: none; place-items: center; width: 23px; height: 20px; }
.ta { flex: none; width: 19px; height: 20px; padding-left: 4px; }
.ta svg { width: 7px; height: 5px; }
.blue { color: #4a80b8; }
.grey { color: #b7b8ba; }
.flip { transform: scaleX(-1); }
.up { transform: rotate(90deg); }
.down { transform: rotate(-90deg); }
.sep { flex: none; width: 1px; height: 15px; margin: 0 4px 0 3px; background: #cfd2d8; }

.tree { flex: 1; margin: 3px 5px 8px 4px; border: 1px solid #d0d3d8; background: #fff; font-size: 11px; }
.tree li { display: flex; align-items: center; height: 18px; white-space: nowrap; }
.tree .s16 { margin: 0 5px 0 5px; }
.tw { flex: none; width: 12px; height: 12px; }
.tree .l0 { padding-left: 4px; } .tree .l1 { padding-left: 24px; } .tree .l2 { padding-left: 44px; } .tree .l3 { padding-left: 64px; }
.sel { background: #dadadc; }

/* Settings */
.settings { border-color: #99ccf6; font-size: 11px; }
.settings h2, .sub { color: #2196ee; }
.settings .pbtns { color: #3c3c3c; }
.sub { padding: 3px 6px 0; font-size: 14px; font-weight: 300; line-height: 21px; }
.labelrow { display: flex; align-items: center; gap: 8px; margin: 9px 5px 8px; }
.labelrow label { min-width: 33px; }
.labelrow input { flex: 1; min-width: 0; height: 20px; padding: 0 3px; border: 1px solid #cfd1d4; background: #fff; }
.goto { display: grid; place-items: center; width: 22px; height: 24px; border: 1px solid #a9abad; border-radius: 2px; background: #e9e9ea; }
.sec { display: flex; align-items: center; height: 25px; margin-bottom: 2px; padding: 0 6px 0 3px; background: #dfe8f4; font-size: 13px; }
.sec .tw { margin-right: 11px; }
.sec.open { height: 28px; margin-bottom: 0; }
.sec.open .caret-s { margin: 0 12px 0 3px; }
.sec.open span { flex: 1; }
.sec.last { margin-bottom: 0; }
.sec .if1 { width: 16px; height: 8px; margin-right: 7px; }
.sec .if2 { width: 16px; height: 12px; }
.body { display: flex; flex-direction: column; padding: 9px 5px 0; margin-bottom: 6px; }
.apply { height: 22px; }
.combo { position: relative; height: 20px; }
.combo select { display: block; width: 100%; height: 20px; padding: 0 10px; appearance: none; border: 1px solid #2196ee; border-radius: 2px; background: #9fd0fa; }
.combo .caret-s { position: absolute; right: 6px; top: 8px; width: 7px; }
.popup { position: absolute; z-index: 2; top: 20px; left: 0; right: 0; border: 1px solid #666; background: #fff; box-shadow: 3px 3px 3px rgba(0,0,0,.45); }
.popup li { height: 19px; padding: 0 5px; line-height: 19px; }
.popup .hot { height: 19px; padding: 0 4px; border: 1px solid #26a0da; background: #b8e0f2; line-height: 17px; }
.popup .cur { background: #f4f4f4; border-top: 1px solid #d8d8d8; line-height: 18px; }
.tablebox { height: 173px; padding-top: 92px; border: 1px solid #d3d5d8; border-top: 0; border-bottom-width: 3px; background: #fff; }
table { width: 100%; border-collapse: collapse; }
td { height: 19px; padding: 0 3px; border: 1px solid #a9a9a9; background: #efefef; line-height: 17px; }
td.ck { width: 30px; background: #fafafa; }
td.ck.on { background: #fff; }
td input { display: block; appearance: none; width: 13px; height: 13px; margin: 0 auto; border: 1px solid #b0b0b0; background: #f4f4f4; }
td input:checked { position: relative; border-color: #666; background: #fff; }
td input:checked::after { content: ""; position: absolute; left: 1px; top: -1px; width: 12px; height: 10px; background: #43952f; clip-path: polygon(0 45%, 18% 28%, 38% 55%, 88% 0, 100% 15%, 38% 95%); }
.body .bar { height: 30px; padding: 2px 0 0 1px; margin-top: 1px; }

/* Graphics */
.graphics { min-width: 0; background: linear-gradient(#fafbff 72px, #e3f0fd); }
.tog svg { width: 18px; height: 18px; }
.view.tb { width: 19px; height: 14px; margin: 0 2px; border-style: solid; border-width: 0 0 1px 1px; color: #34588a; font-size: 12px; line-height: 10px; padding: 0 0 3px 1px; }
.view.xy { border-color: #34588a #34588a #34588a #58a84a; }
.view.yz { border-color: #58a84a #58a84a #58a84a #34588a; }
.view.xz { border-color: #c8283c #c8283c #c8283c #34588a; }
.canvas { flex: 1; width: 100%; height: auto; min-height: 0; }
.canvas text { fill: #111; font: 13px "Open Sans", sans-serif; }

.status { height: 32px; padding-left: 50px; font-size: 11px; text-align: center; line-height: 32px; }
```
